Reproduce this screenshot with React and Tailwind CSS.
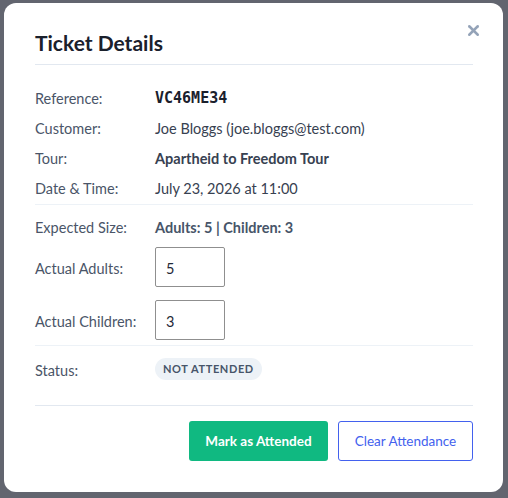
import { X } from "lucide-react";

const Row = ({ label, children, className = "", valueClass = "pt-[3px]" }) => (
  <div className={`flex items-center ${className}`}>
    <div className="w-[120px] shrink-0 pt-[3px] text-[14.5px] text-[#4a5568]">{label}</div>
    <div className={`flex items-center text-[14.5px] text-[#374151] ${valueClass}`}>{children}</div>
  </div>
);

const inputCls =
  "w-[70px] h-[40px] border border-[#8f8f8f] rounded-[2px] px-[10px] pt-[2px] text-[14.5px] text-[#1f2937] outline-none";

const App = () => {
  return (
    <div className="w-[508px] h-[498px] bg-[#62656f] flex items-start justify-start" style={{ fontFamily: '"Lato", sans-serif' }}>
      <div className="relative mt-[3px] ml-[4px] w-[499px] h-[489px] bg-white rounded-[12px] pl-[31px] pr-[30px] pt-[26px] pb-[30px]">
        <button className="absolute top-[19px] right-[21px] text-[#94a3b8]">
          <X size={17} strokeWidth={3.5} />
        </button>

        <div className="h-[36px] border-b border-[#e2e8f0] flex items-start">
          <h2 className="text-[21px] leading-[28px] font-bold text-[#1a202c]">Ticket Details</h2>
        </div>

        <div className="pt-[17px] pb-[2px] border-b border-[#edf2f7]">
          <Row label="Reference:" className="h-[30px]">
            <span className="font-bold text-[15px] text-[#1a202c]" style={{ fontFamily: '"DejaVu Sans Mono", monospace' }}>VC46ME34</span>
          </Row>
          <Row label="Customer:" className="h-[30px]">Joe Bloggs (joe.bloggs@test.com)</Row>
          <Row label="Tour:" className="h-[30px]">
            <span className="font-bold">Apartheid to Freedom Tour</span>
          </Row>
          <Row label="Date & Time:" className="h-[30px]">July 23, 2026 at 11:00</Row>
        </div>

        <div className="pt-[6px] pb-[5px] border-b border-[#edf2f7]">
          <Row label="Expected Size:" className="h-[30px]">
            <span className="font-bold text-[#475569]">Adults: 5 | Children: 3</span>
          </Row>
          <Row label="Actual Adults:" className="h-[40px] mt-[6px]" valueClass="">
            <input type="number" defaultValue={5} className={inputCls} />
          </Row>
          <Row label="Actual Children:" className="h-[40px] mt-[13px]" valueClass="">
            <input type="number" defaultValue={3} className={inputCls} />
          </Row>
        </div>

        <div className="pt-[11px] pb-[24px] border-b border-[#e2e8f0]">
          <Row label="Status:" className="h-[24px]" valueClass="">
            <span className="inline-flex items-center h-[22px] pt-[1px] px-[8px] rounded-full bg-[#edf2f7] text-[11px] font-bold tracking-[0.6px] text-[#475569]">
              NOT ATTENDED
            </span>
          </Row>
        </div>

        <div className="flex justify-end gap-[10px] pt-[15px]">
          <button className="h-[40px] w-[139px] rounded-[3px] bg-[#10b981] text-white text-[13.5px] font-bold">
            Mark as Attended
          </button>
          <button className="h-[40px] w-[135px] rounded-[3px] border border-[#4361ee] text-[#4361ee] text-[13.5px] bg-white">
            Clear Attendance
          </button>
        </div>
      </div>
    </div>
  );
};

export default App;
